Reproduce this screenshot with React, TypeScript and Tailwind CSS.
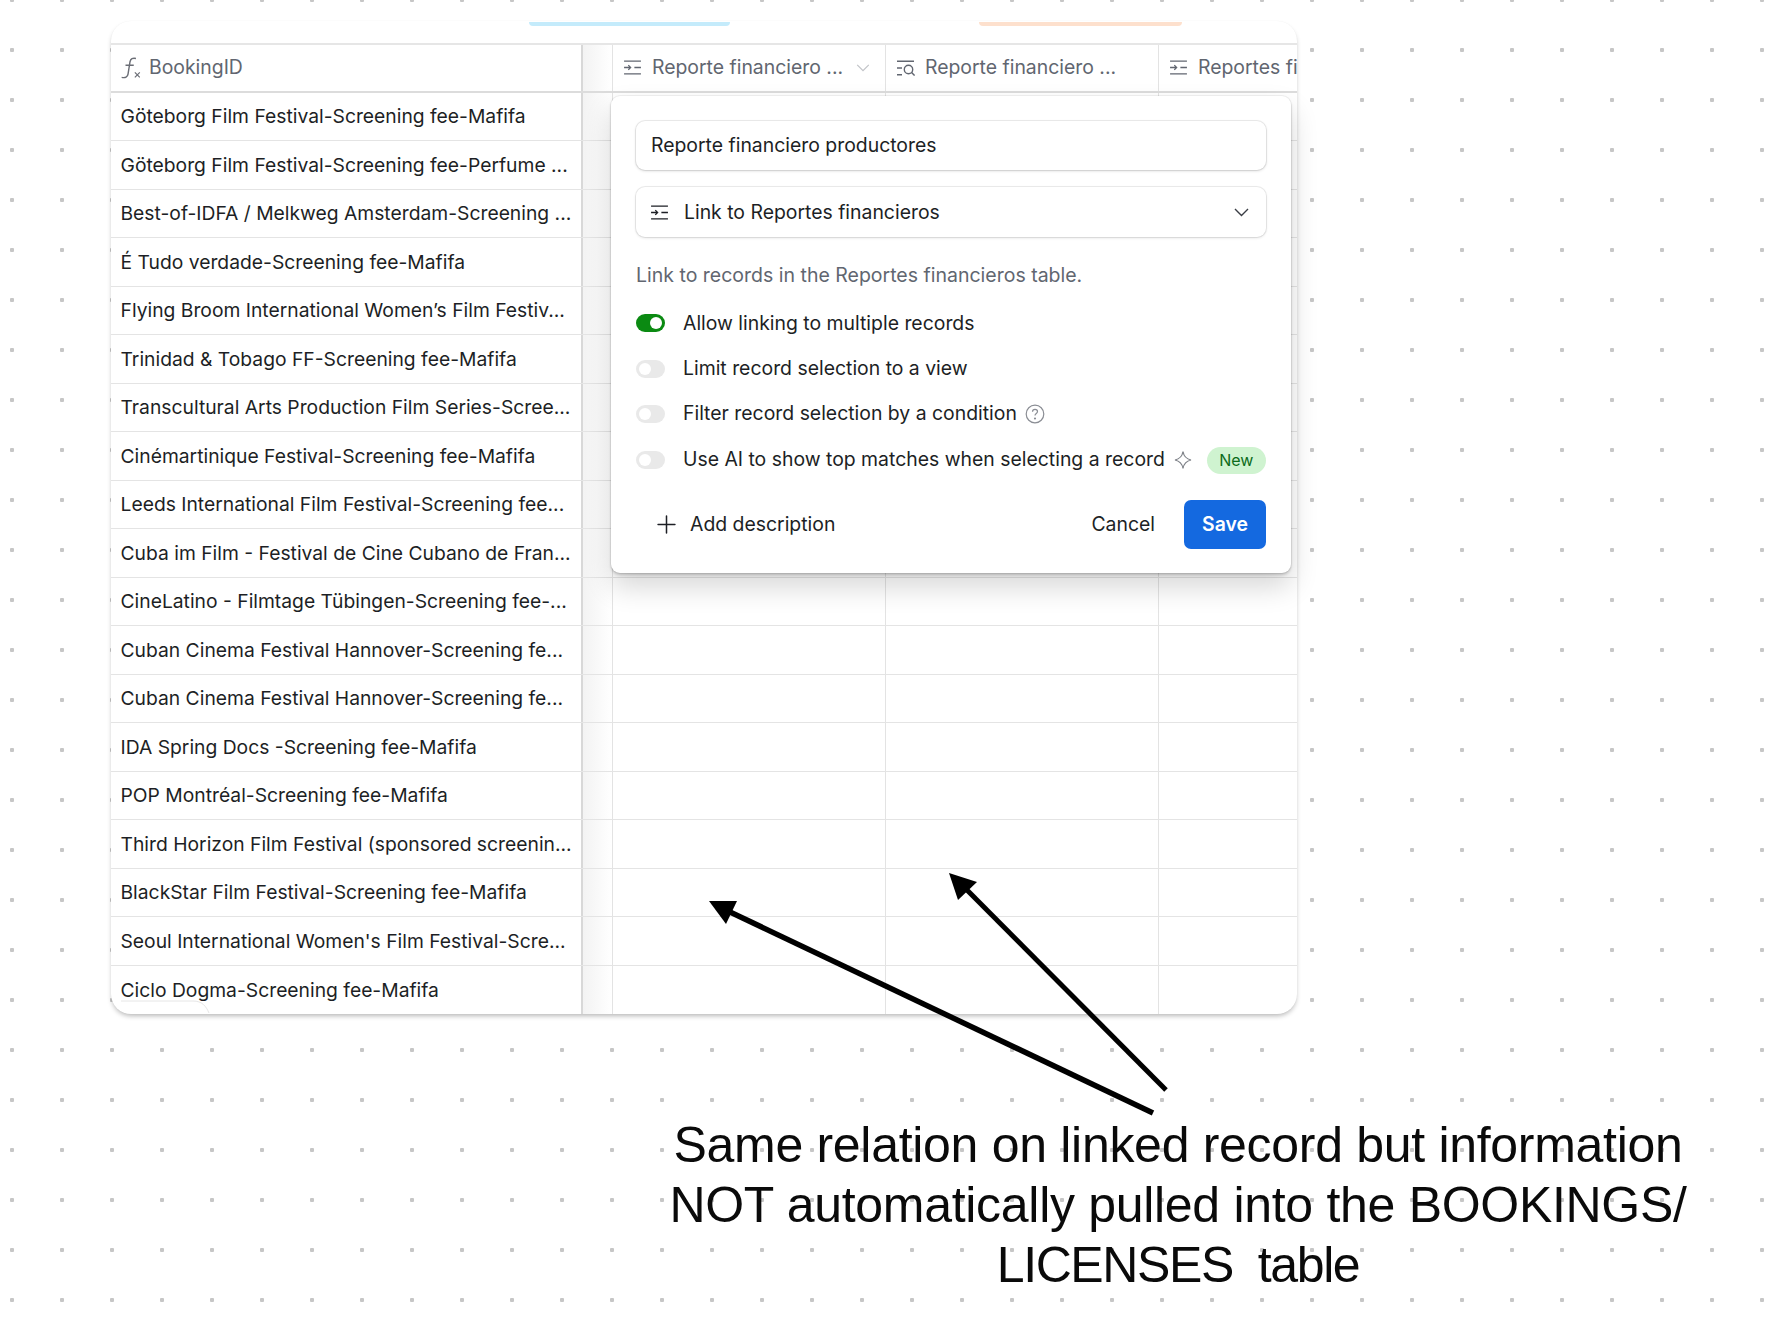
import { Plus } from "lucide-react";

const rows = [
  "Göteborg Film Festival-Screening fee-Mafifa",
  "Göteborg Film Festival-Screening fee-Perfume ...",
  "Best-of-IDFA / Melkweg Amsterdam-Screening ...",
  "É Tudo verdade-Screening fee-Mafifa",
  "Flying Broom International Women’s Film Festiv...",
  "Trinidad & Tobago FF-Screening fee-Mafifa",
  "Transcultural Arts Production Film Series-Scree...",
  "Cinémartinique Festival-Screening fee-Mafifa",
  "Leeds International Film Festival-Screening fee...",
  "Cuba im Film - Festival de Cine Cubano de Fran...",
  "CineLatino - Filmtage Tübingen-Screening fee-...",
  "Cuban Cinema Festival Hannover-Screening fe...",
  "Cuban Cinema Festival Hannover-Screening fe...",
  "IDA Spring Docs -Screening fee-Mafifa",
  "POP Montréal-Screening fee-Mafifa",
  "Third Horizon Film Festival (sponsored screenin...",
  "BlackStar Film Festival-Screening fee-Mafifa",
  "Seoul International Women's Film Festival-Scre...",
  "Ciclo Dogma-Screening fee-Mafifa",
];

function LinkIcon({ className }: { className?: string }) {
  return (
    <svg viewBox="0 0 20 16" fill="none" stroke="currentColor" strokeWidth="1.4" className={className}>
      <path d="M1 1.2h18M1 14.8h18M12 8h7M1 8h7M5.5 5.5 8 8l-2.5 2.5" />
    </svg>
  );
}

function LookupIcon({ className }: { className?: string }) {
  return (
    <svg viewBox="0 0 20 16" fill="none" stroke="currentColor" strokeWidth="1.4" className={className}>
      <path d="M1 1.2h17M1 8h5M1 14.8h5" />
      <circle cx="12.5" cy="9.5" r="4.2" />
      <path d="m15.6 12.6 3 3" />
    </svg>
  );
}

function Formula({ className }: { className?: string }) {
  return (
    <svg viewBox="0 0 18 20" fill="none" stroke="currentColor" strokeWidth="1.3" className={className}>
      <path d="M13.500 1.300c-3-.7-4.800.3-5.400 3L6.300 15.500c-.5 2.800-2.300 3.700-5.800 3M4 7.500h7.500" />
      <path d="m12.500 14 4.500 4.500m0-4.500-4.500 4.500" strokeWidth="1.100" />
    </svg>
  );
}

function Chevron({ className }: { className?: string }) {
  return (
    <svg viewBox="0 0 15 9" fill="none" stroke="currentColor" strokeWidth="1.4" className={className}>
      <path d="m1 1 6.500 6.500L14 1" />
    </svg>
  );
}

function Toggle({ on }: { on?: boolean }) {
  return on ? (
    <div className="flex h-[18px] w-[29px] shrink-0 items-center justify-end rounded-full bg-[#0b8a12] pr-[3px]">
      <div className="h-[12px] w-[12px] rounded-full bg-white" />
    </div>
  ) : (
    <div className="flex h-[18px] w-[29px] shrink-0 items-center rounded-full bg-[#e9e9e9] pl-[3px]">
      <div className="h-[12px] w-[12px] rounded-full bg-white" />
    </div>
  );
}

function Popover() {
  return (
    <div className="absolute left-[500px] top-[75px] h-[477px] w-[680px] rounded-[9px] bg-white px-[25px] pt-[25px] shadow-[0_0_0_1px_rgba(0,0,0,0.05),0_2px_3px_rgba(0,0,0,0.18),0_14px_28px_rgba(0,0,0,0.16)]">
      <div className="flex h-[49px] items-center rounded-[9px] bg-white pl-[15px] pt-px text-[#1d1f25] shadow-[0_0_0_1px_rgba(0,0,0,0.07),0_1px_3px_rgba(0,0,0,0.16)]">
        Reporte financiero productores
      </div>
      <div className="mt-[17px] flex h-[50px] items-center rounded-[9px] bg-white pl-[14px] pr-[17px] text-[#1d1f25] shadow-[0_0_0_1px_rgba(0,0,0,0.07),0_1px_3px_rgba(0,0,0,0.12)]">
        <LinkIcon className="h-[15px] w-[19px] shrink-0" />
        <span className="ml-[15px] pt-px">Link to Reportes financieros</span>
        <Chevron className="ml-auto h-[9px] w-[15px] text-[#3a3d44]" />
      </div>
      <div className="mt-[25px] h-[26px] text-[19.500px] leading-[26px] text-[#616670]">Link to records in the Reportes financieros table.</div>
      <div className="mt-[22px] flex flex-col gap-[19.500px] text-[#1d1f25]">
        <div className="flex h-[26px] items-center gap-[18px]">
          <Toggle on />
          <span className="pt-px">Allow linking to multiple records</span>
        </div>
        <div className="flex h-[26px] items-center gap-[18px]">
          <Toggle />
          <span className="pt-px">Limit record selection to a view</span>
        </div>
        <div className="flex h-[26px] items-center gap-[18px]">
          <Toggle />
          <span>Filter record selection by a condition</span>
          <svg viewBox="0 0 20 20" fill="none" stroke="#8a8d94" strokeWidth="1.200" className="-ml-[10px] h-[20px] w-[20px]">
            <circle cx="10" cy="10" r="8.800" />
            <path d="M7.500 7.800c0-1.500 1.100-2.400 2.500-2.400s2.500.9 2.500 2.200c0 1.800-2.500 1.900-2.500 3.800" />
            <circle cx="10" cy="14.500" r=".5" fill="#8a8d94" />
          </svg>
        </div>
        <div className="flex h-[27px] items-center gap-[18px]">
          <Toggle />
          <span>Use AI to show top matches when selecting a record</span>
          <svg viewBox="0 0 20 20" fill="none" stroke="#7d8087" strokeWidth="1.200" className="-ml-[10px] h-[20px] w-[20px] shrink-0">
            <path d="M10 1.500c.8 4.800 3.200 7.500 8 8.500-4.800 1-7.200 3.700-8 8.500-.8-4.800-3.200-7.500-8-8.500 4.800-1 7.200-3.700 8-8.500Z" />
          </svg>
          <div className="-ml-[4px] flex h-[27px] w-[59px] shrink-0 items-center justify-center rounded-full bg-[#cff3d0] text-[16px] text-[#0c6b1a]">New</div>
        </div>
      </div>
      <div className="mt-[26px] flex h-[49px] items-center text-[#1d1f25]">
        <Plus size={29} strokeWidth={1.250} className="ml-[16px]" />
        <span className="ml-[9px] pt-px">Add description</span>
        <span className="ml-auto mr-[29px] pt-px">Cancel</span>
        <button className="h-[49px] w-[82px] rounded-[7px] bg-[#1469e0] pt-px font-semibold text-white">Save</button>
      </div>
    </div>
  );
}

export default function App() {
  return (
    <div className="relative h-[1344px] w-[1776px] overflow-hidden bg-white font-['Inter',sans-serif] text-[19.400px]">
      <div className="h-[1302px] bg-[radial-gradient(circle_at_center,#c6c6c6_2px,transparent_2.500px)] bg-[length:50px_50px] bg-[position:-13px_-25px] pl-[111px] pt-[21px]">
        <div className="relative w-[1186px]">
          <div className="overflow-hidden rounded-[20px] bg-white shadow-[0_0_1px_rgba(0,0,0,0.05),0_3px_5px_-1px_rgba(0,0,0,0.28)]">
            {/* colored strip */}
            <div className="flex h-[21.500px] items-start pl-[418px]">
              <div className="mt-px h-[4px] w-[201px] rounded-b-[4px] bg-[#c4ebfb]" />
              <div className="ml-[249px] mt-px h-[4px] w-[203px] rounded-b-[4px] bg-[#fde0cd]" />
            </div>

            {/* header */}
            <div className="box-content flex h-[46px] border-b-2 border-t-2 border-b-[#dcdcdc] border-t-[#e6e6e6] text-[#616670]">
              <div className="flex w-[472px] shrink-0 items-center border-r-2 border-[#d8d8d8] pl-[10px]">
                <Formula className="h-[22px] w-[20px] shrink-0 text-[#6b6e76]" />
                <span className="ml-[8px]">BookingID</span>
              </div>
              <div className="w-[29px] shrink-0 bg-gradient-to-r from-[#f3f3f3] to-white" />
              <div className="flex w-[273px] shrink-0 items-center border-l border-[#e3e3e3] pl-[10px]">
                <LinkIcon className="h-[15px] w-[19px] shrink-0" />
                <span className="ml-[10px]">Reporte financiero ...</span>
                <Chevron className="ml-[13px] h-[8px] w-[14px] text-[#c2c4c8]" />
              </div>
              <div className="flex w-[273px] shrink-0 items-center border-l border-[#e3e3e3] pl-[10px]">
                <LookupIcon className="h-[16px] w-[20px] shrink-0" />
                <span className="ml-[9px]">Reporte financiero ...</span>
              </div>
              <div className="flex min-w-0 flex-1 items-center overflow-hidden whitespace-nowrap border-l border-[#e3e3e3] pl-[10px]">
                <LinkIcon className="h-[15px] w-[19px] shrink-0" />
                <span className="ml-[10px]">Reportes financieros</span>
              </div>
            </div>

            {/* rows */}
            {rows.map((r, i) => (
              <div key={i} className="flex h-[48.500px] border-b border-[#e4e4e4] last:border-b-0">
                <div className="flex w-[472px] shrink-0 items-center whitespace-nowrap border-r-2 border-[#d8d8d8] pl-[9.500px] pt-px text-[19.300px] text-[#1d1f25]">{r}</div>
                <div className="w-[29px] shrink-0 bg-gradient-to-r from-[#f3f3f3] to-white" />
                <div className="w-[273px] shrink-0 border-l border-[#e3e3e3]" />
                <div className="w-[273px] shrink-0 border-l border-[#e3e3e3]" />
                <div className="min-w-0 flex-1 border-l border-[#e3e3e3]" />
              </div>
            ))}
          </div>

          {/* stray corner curve */}
          <svg className="absolute bottom-0 left-[2px] h-[14px] w-[100px]" viewBox="0 0 100 14" fill="none" stroke="#e6e6e6" strokeWidth="1">
            <path d="M8 1h72c9 0 13 5 16 12" />
          </svg>

          <Popover />
        </div>

        <div className="ml-[497px] mt-[101px] w-[1140px] text-center font-['Liberation_Sans',sans-serif] text-[50px] leading-[60px] tracking-[-0.300px] text-[#0a0a0a]">
          <div>Same relation on linked record but information</div>
          <div>NOT automatically pulled into the BOOKINGS/</div>
          <div className="whitespace-pre tracking-[-1.400px]">LICENSES  table</div>
        </div>
      </div>

      {/* arrows */}
      <svg className="absolute left-0 top-0 h-[1344px] w-[1776px]" viewBox="0 0 1776 1344" fill="none">
        <path d="M1153 1113 730 912" stroke="#000" strokeWidth="5.500" />
        <path d="M709 901 737 901 726 924Z" fill="#000" />
        <path d="M1166 1090 966 889" stroke="#000" strokeWidth="5" />
        <path d="M949 873 977 882 958 900Z" fill="#000" />
      </svg>
    </div>
  );
}
